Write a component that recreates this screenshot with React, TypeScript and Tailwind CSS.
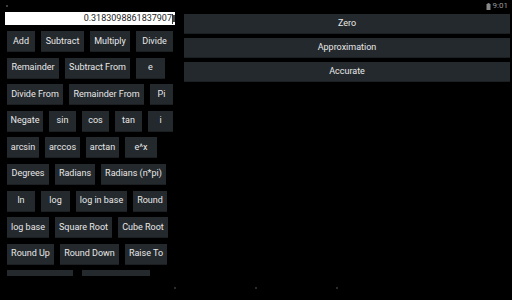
const rows: { label: string; w: string }[][] = [
  [
    { label: 'Add', w: 'w-[28px]' },
    { label: 'Subtract', w: 'w-[43px]' },
    { label: 'Multiply', w: 'w-[40px]' },
    { label: 'Divide', w: 'w-[37px]' },
  ],
  [
    { label: 'Remainder', w: 'w-[52px]' },
    { label: 'Subtract From', w: 'w-[65px]' },
    { label: 'e', w: 'w-[29px]' },
  ],
  [
    { label: 'Divide From', w: 'w-[56px]' },
    { label: 'Remainder From', w: 'w-[75px]' },
    { label: 'Pi', w: 'w-[23px]' },
  ],
  [
    { label: 'Negate', w: 'w-[36px]' },
    { label: 'sin', w: 'w-[27px]' },
    { label: 'cos', w: 'w-[27px]' },
    { label: 'tan', w: 'w-[27px]' },
    { label: 'i', w: 'w-[25px]' },
  ],
  [
    { label: 'arcsin', w: 'w-[32px]' },
    { label: 'arccos', w: 'w-[35px]' },
    { label: 'arctan', w: 'w-[33px]' },
    { label: 'e^x', w: 'w-[32px]' },
  ],
  [
    { label: 'Degrees', w: 'w-[42px]' },
    { label: 'Radians', w: 'w-[40px]' },
    { label: 'Radians (n*pi)', w: 'w-[65px]' },
  ],
  [
    { label: 'ln', w: 'w-[28px]' },
    { label: 'log', w: 'w-[29px]' },
    { label: 'log in base', w: 'w-[51px]' },
    { label: 'Round', w: 'w-[34px]' },
  ],
  [
    { label: 'log base', w: 'w-[42px]' },
    { label: 'Square Root', w: 'w-[57px]' },
    { label: 'Cube Root', w: 'w-[50px]' },
  ],
  [
    { label: 'Round Up', w: 'w-[47px]' },
    { label: 'Round Down', w: 'w-[59px]' },
    { label: 'Raise To', w: 'w-[42px]' },
  ],
  // last row is scrolled under the nav bar, labels not visible
  [
    { label: '', w: 'w-[66px]' },
    { label: '', w: 'w-[68px] ml-[3px]' },
  ],
];

const modes = ['Zero', 'Approximation', 'Accurate'];

const font = { fontFamily: 'Roboto, "Noto Sans", sans-serif' };

function Key({ label, w }: { label: string; w: string }) {
  return (
    <button
      className={`h-[21px] ${w} shrink-0 bg-[#24292d] border-b border-[#1b1f22] text-[9px] leading-none text-[#e8e8e8] whitespace-nowrap flex items-center justify-center`}
    >
      {label}
    </button>
  );
}

export default function App() {
  return (
    <div className="w-[512px] h-[300px] bg-black flex flex-col overflow-hidden" style={font}>
      {/* Status bar */}
      <div className="h-[12px] flex items-center justify-between pl-[6px] pr-[4px]">
        <span className="w-[2px] h-[2px] rounded-full bg-[#555]" />
        <div className="flex items-center gap-[2px] text-[8px] leading-none text-[#9a9a9a]">
          <svg width="5" height="7" viewBox="0 0 5 7">
            <rect x="1.5" y="0" width="2" height="1" fill="#777" />
            <rect x="0.5" y="1" width="4" height="6" fill="#888" />
          </svg>
          <span>9:01</span>
        </div>
      </div>

      {/* Content */}
      <div className="flex-1 flex min-h-0">
        <div className="w-[180px] shrink-0 overflow-hidden">
          <div className="ml-[5px] w-[170px] h-[13px] bg-white overflow-hidden flex items-center justify-end">
            <span className="text-[9px] leading-none text-[#222] whitespace-nowrap">0.3183098861837907</span>
            <span className="w-px h-[10px] bg-[#333] shrink-0" />
            <span className="w-[2px] h-[7px] bg-[#444] shrink-0" />
          </div>
          <div className="mt-[6px] pl-[7px] flex flex-col gap-y-[5.6px]">
            {rows.map((row, i) => (
              <div key={i} className="flex gap-[6px]">
                {row.map((k, j) => (
                  <Key key={j} label={k.label} w={k.w} />
                ))}
              </div>
            ))}
          </div>
        </div>

        <div className="flex-1 pl-[4px] pr-[2px] pt-[2px] flex flex-col gap-[4px]">
          {modes.map((m) => (
            <button
              key={m}
              className="h-[20px] w-full bg-[#24292d] border-b border-[#1b1f22] text-[9px] leading-none text-[#e8e8e8] flex items-center justify-center"
            >
              {m}
            </button>
          ))}
        </div>
      </div>

      {/* Navigation bar (lights out) */}
      <div className="h-[24px] flex items-center justify-center gap-[79px]">
        <span className="w-[2px] h-[2px] rounded-full bg-[#3a3a3a]" />
        <span className="w-[2px] h-[2px] rounded-full bg-[#3a3a3a]" />
        <span className="w-[2px] h-[2px] rounded-full bg-[#3a3a3a]" />
      </div>
    </div>
  );
}
